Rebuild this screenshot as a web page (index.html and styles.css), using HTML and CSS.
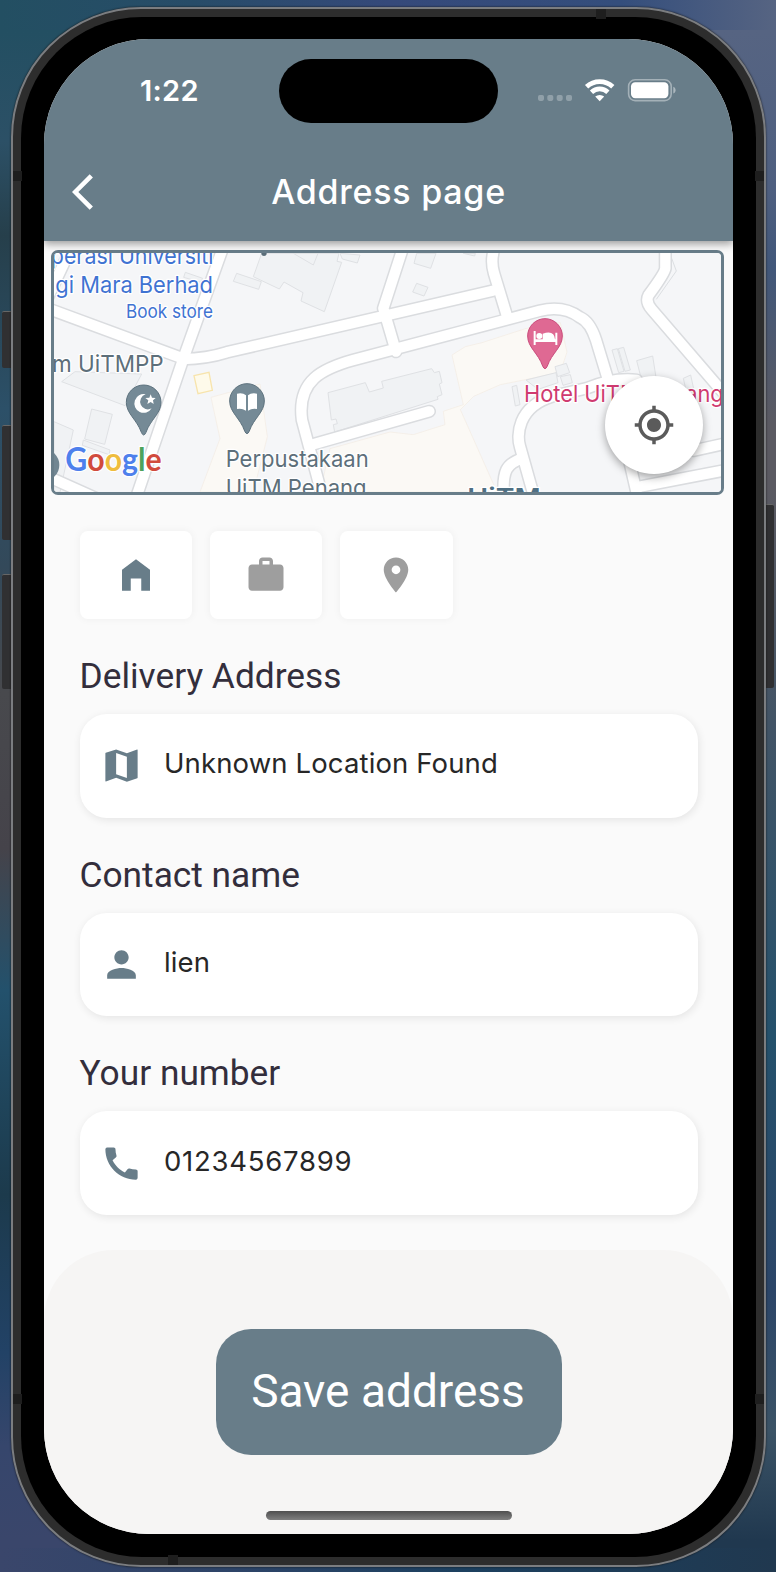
FILE: index.html
```html
<!DOCTYPE html>
<html lang="en">
<head>
<meta charset="utf-8">
<title>Address page</title>
<link rel="stylesheet" href="styles.css">
</head>
<body>
<div class="wallpaper">
  <i class="side-key key-action"></i><i class="side-key key-up"></i><i class="side-key key-down"></i><i class="side-key key-power"></i>
  <div class="phone">
    <i class="band band-l1"></i><i class="band band-r1"></i><i class="band band-l2"></i><i class="band band-r2"></i><i class="band band-t"></i><i class="band band-b"></i>
    <div class="bezel">
      <div class="screen">
        <header class="app-bar">
          <div class="status">
            <span class="time">1:22</span>
            <span class="island"></span>
            <svg class="status-icons" viewBox="0 0 138 24" width="138" height="24">
              <g fill="#fff" fill-opacity=".27"><rect x="0" y="15.9" width="6" height="6" rx="1.800"/><rect x="9.300" y="15.9" width="6" height="6" rx="1.800"/><rect x="18.700" y="15.9" width="6" height="6" rx="1.800"/><rect x="28" y="15.9" width="6" height="6" rx="1.800"/></g>
              <g fill="none" stroke="#fff" stroke-width="4.700"><path d="M48.600 7.800a19 19 0 0 1 26.200 0"/><path d="M53.500 13.200a12 12 0 0 1 16.400 0"/></g>
              <path d="M57.200 17.600a6.900 6.900 0 0 1 9 0l-4.500 4.600z" fill="#fff"/>
              <rect x="90.600" y=".8" width="42.600" height="20.800" rx="6.500" fill="none" stroke="#fff" stroke-opacity=".4" stroke-width="1.600"/>
              <rect x="93" y="3.200" width="37.400" height="16" rx="4.200" fill="#fff"/>
              <path d="M135.300 7.800c3 1.200 3 5.500 0 6.800z" fill="#fff" fill-opacity=".45"/>
            </svg>
          </div>
          <div class="title-row">
            <svg class="back" viewBox="0 0 22 36" width="22" height="36"><path d="M19.300 1.800 3.200 18l16.100 16.200" fill="none" stroke="#fff" stroke-width="4.600"/></svg>
            <h1>Address page</h1>
          </div>
        </header>
        <main class="content">
          <section class="map">
            <svg class="map-art" viewBox="42 39 2001 717" width="667" height="239" preserveAspectRatio="none">
              <rect x="42" y="39" width="2001" height="717" fill="#f5f6f8"/>
              <g fill="#fbf9f5" stroke="#f3ece3" stroke-width="2">
                <path d="M513 472 660 432 682 590 640 756H480l60-160z"/>
                <path d="M1236 345l40-25 50-12 130-42 105-18 20 88-20 60-80 18-100 20-80 35-40 40 110 247H840l30-130 180-50 70 8 95-30-5-40 60-20z"/>
              </g>
              <path d="M462 407l45-10 10 54-43 10z" fill="#fefaea" stroke="#f7e4ad" stroke-width="4"/>
              <g fill="#f0f2f4" stroke="#dfe1e4" stroke-width="3">
                <path d="M665 40 640 110l78 37 14-21 57 32-6 25 70 32 52-148-14-3 6-24z"/>
                <path d="M590 100l74 25-8 23-76-24zM436 97l52 18-5 12-52-15zM760 40l60 35 14-35zM900 40l60 5-8 24-45-12z"/>
                <path d="M105 395 65 425l190 72 50-95zM42 545l58 25-40 186H42zM155 507l62 16-23 90-60-16zM130 600l80 30-3 14-80-28z"/>
                <path d="M864 458l112-30 12 28 42-12-5-20 150-38 8 12 15-4 8 34-8 4 8 32-14 6 2 8-310 98-4-22 12-3-4-14-14 3z"/>
                <path d="M1130 40h58l-16 45-50-15zM1130 130l34 12-12 26-34-12zM1270 40h36l-2 8z"/>
                <path d="M1545 380l34-10 10 28-36 12zM1561 410l30-6 6 24-28 8zM1416 440l14-4 10 58-14 4zM1458 420l90-22 6 30-60 20zM1716 330l16-4 20 68-16 4zM1735 326l16-4 20 68-16 4zM1790 362l48-14 14 90-40 10zM1930 415l22-10 36 165-22 6z"/>
              </g>
              <path d="M1895 55l14 38-60 85" fill="none" stroke="#dcdfe2" stroke-width="3"/>
              <g class="road-edge">
                <path d="M30 208 420 352M550 20 432 350 286 780M20 180 95 20"/>
                <path d="M430 357Q500 356 560 337L1358 152M1090 20 1030 205 1068 335M1365 20Q1350 60 1362 100L1403 235"/>
                <path d="M850 780 786 540C770 420 850 385 940 360L1403 238 1500 212Q1570 195 1620 232 1650 245 1668 300L1706 425"/>
                <path d="M815 614 1168 514M1876 20V85Q1874 100 1826 165 1815 185 1835 208L2060 470"/>
                <path d="M1790 420Q1720 412 1640 445L1540 468C1430 500 1430 590 1440 620L1485 780M1448 655C1400 670 1385 690 1392 780M1765 650 1795 780M1960 632 2060 610M1800 740 2060 690M20 708 180 780"/>
              </g>
              <g class="road-fill">
                <path d="M30 208 420 352M550 20 432 350 286 780M20 180 95 20"/>
                <path d="M430 357Q500 356 560 337L1358 152M1090 20 1030 205 1068 335M1365 20Q1350 60 1362 100L1403 235"/>
                <path d="M850 780 786 540C770 420 850 385 940 360L1403 238 1500 212Q1570 195 1620 232 1650 245 1668 300L1706 425"/>
                <path d="M815 614 1168 514M1876 20V85Q1874 100 1826 165 1815 185 1835 208L2060 470"/>
                <path d="M1790 420Q1720 412 1640 445L1540 468C1430 500 1430 590 1440 620L1485 780M1448 655C1400 670 1385 690 1392 780M1765 650 1795 780M1960 632 2060 610M1800 740 2060 690M20 708 180 780"/>
              </g>
              <circle cx="672" cy="40" r="8" fill="#5b6e79"/>
              <circle cx="10" cy="675" r="48" fill="#718692"/>
              <g class="pin-slate"><path d="M311 435a52 52 0 0 0-52 52c0 34 32 52 45 90q7 16 14 0c13-38 45-56 45-90a52 52 0 0 0-52-52z"/><path d="M621 431a52 52 0 0 0-52 52c0 34 32 52 45 90q7 16 14 0c13-38 45-56 45-90a52 52 0 0 0-52-52z"/></g>
              <path class="pin-pink" d="M1515 236a52 52 0 0 0-52 52c0 34 32 52 45 90q7 16 14 0c13-38 45-56 45-90a52 52 0 0 0-52-52z"/>
              <g fill="#fff">
                <path d="M317 463a28 28 0 1 0 18 42 23 23 0 1 1-18-42z"/>
                <path d="M332 463l4 10 11 1-8 7 2 11-9-6-10 6 3-11-9-7 12-1z"/>
                <path d="M591 461q17-4 27 5v46q-12-8-27-5zM651 461q-17-4-27 5v46q12-8 27-5z"/>
                <path d="M1481 273h6v25h21v-17q35-12 37 17h1v-20h6v37h-6v-9h-59v9h-6z"/><circle cx="1498" cy="288" r="9"/>
              </g>
              <g class="map-label">
                <g fill="#3f73d2"><text x="-6" y="72" font-size="70" textLength="526" lengthAdjust="spacingAndGlyphs">operasi Universiti</text><text x="46" y="160" font-size="70" textLength="473" lengthAdjust="spacingAndGlyphs">gi Mara Berhad</text><text x="258" y="234" font-size="57" textLength="261" lengthAdjust="spacingAndGlyphs">Book store</text></g>
                <g fill="#5d6f7a"><text x="36" y="395" font-size="70" textLength="335" lengthAdjust="spacingAndGlyphs">m UiTMPP</text><text x="557" y="680" font-size="70" textLength="429" lengthAdjust="spacingAndGlyphs">Perpustakaan</text><text x="557" y="769" font-size="70" textLength="423" lengthAdjust="spacingAndGlyphs">UiTM Penang</text></g>
                <text x="1452" y="486" font-size="70" textLength="599" lengthAdjust="spacingAndGlyphs" fill="#cf3a70">Hotel UiTM Penang</text>
                <text x="1282" y="801" font-size="78" font-weight="600" textLength="220" lengthAdjust="spacingAndGlyphs" fill="#4e6f83">UiTM</text>
              </g>
              <text class="google" x="76" y="692" font-size="97" textLength="289" lengthAdjust="spacingAndGlyphs"><tspan fill="#4e80ec">G</tspan><tspan fill="#d14b3d">o</tspan><tspan fill="#efbd3e">o</tspan><tspan fill="#4e80ec">g</tspan><tspan fill="#4ca35b">l</tspan><tspan fill="#d14b3d">e</tspan></text>
            </svg>
            <button class="locate" aria-label="My location"><svg viewBox="0 0 24 24" width="42" height="42"><path fill="#5b5b5b" d="M12 8c-2.210 0-4 1.790-4 4s1.790 4 4 4 4-1.790 4-4-1.790-4-4-4zm8.940 3A8.994 8.994 0 0 0 13 3.060V1h-2v2.060A8.994 8.994 0 0 0 3.060 11H1v2h2.060A8.994 8.994 0 0 0 11 20.940V23h2v-2.060A8.994 8.994 0 0 0 20.940 13H23v-2h-2.060zM12 19c-3.870 0-7-3.130-7-7s3.130-7 7-7 7 3.130 7 7-3.130 7-7 7z"/></svg></button>
          </section>
          <div class="form">
            <div class="types">
              <button class="type active"><svg viewBox="0 0 24 24"><path d="M4 21V9l8-6 8 6v12h-5v-7H9v7z"/></svg></button>
              <button class="type"><svg viewBox="0 0 24 24"><path d="M20 6h-4V4c0-1.110-.89-2-2-2h-4c-1.110 0-2 .89-2 2v2H4c-1.110 0-1.990.89-1.990 2L2 19c0 1.110.89 2 2 2h16c1.110 0 2-.89 2-2V8c0-1.110-.89-2-2-2zm-6 0h-4V4h4v2z"/></svg></button>
              <button class="type"><svg viewBox="0 0 24 24"><path d="M12 2C8.130 2 5 5.130 5 9c0 5.250 7 13 7 13s7-7.750 7-13c0-3.870-3.130-7-7-7zm0 9.500a2.500 2.500 0 0 1 0-5 2.500 2.500 0 0 1 0 5z"/></svg></button>
            </div>
            <h2>Delivery Address</h2>
            <div class="field"><svg viewBox="0 0 24 24"><path d="M15 5.100 9 3 3.200 4.950 3 5.200V20.800l.3.150L9 18.900l6 2.100 5.800-1.950.2-.25V3.200l-.3-.15zM15 19l-6-2.110V5l6 2.110z"/></svg><span>Unknown Location Found</span></div>
            <h2>Contact name</h2>
            <div class="field"><svg viewBox="0 0 24 24"><path d="M12 12c2.210 0 4-1.790 4-4s-1.790-4-4-4-4 1.790-4 4 1.790 4 4 4zm0 2c-2.670 0-8 1.340-8 4v2h16v-2c0-2.660-5.330-4-8-4z"/></svg><span>lien</span></div>
            <h2>Your number</h2>
            <div class="field"><svg viewBox="0 0 24 24"><path d="M20.010 15.380c-1.230 0-2.420-.2-3.530-.56a.977.977 0 0 0-1.010.24l-1.570 1.970c-2.830-1.350-5.480-3.900-6.890-6.830l1.950-1.660c.27-.28.35-.67.24-1.020-.37-1.110-.56-2.300-.56-3.530 0-.54-.45-.99-.99-.99H4.190C3.650 3 3 3.240 3 3.990 3 13.280 10.730 21 20.010 21c.71 0 .99-.63.99-1.180v-3.450c0-.54-.45-.99-.99-.99z"/></svg><span class="number">01234567899</span></div>
          </div>
        </main>
        <footer class="bottom">
          <button class="save">Save address</button>
          <span class="home-indicator"></span>
        </footer>
      </div>
    </div>
  </div>
</div>
</body>
</html>
```
FILE: styles.css
```css
* { box-sizing: border-box; }
body { margin: 0; font-family: Roboto, sans-serif; }
h1, h2 { margin: 0; font-weight: 400; }
button { border: 0; padding: 0; margin: 0; font: inherit; }
svg { display: block; flex: none; }

.wallpaper {
  position: relative;
  width: 776px;
  height: 1572px;
  padding: 7px 9px 4px 11px;
  overflow: hidden;
  background:
    linear-gradient(90deg, #234f62 0, #274c68 25%, #35497a 50%, #344e7c 80%, #566482 100%) top / 100% 30px no-repeat,
    linear-gradient(90deg, #3a466b 0, #2d4468 30%, #1c405f 60%, #20384f 100%) bottom / 100% 24px no-repeat,
    linear-gradient(#234f62 2%, #2c5066 9%, #263f4b 15%, #2c5068 26%, #33495a 36%, #48494d 44%, #45434a 54%, #23516c 63%, #1c3a4c 76%, #224266 86%, #36466c 92%, #3a466b 98%) left / 50% 100% no-repeat,
    linear-gradient(#566482 2%, #4e5f80 12%, #41577a 17%, #5b5a62 27%, #5b5a62 31%, #425466 46%, #24516c 66%, #2b4568 82%, #3b5366 91%, #20384f 98%) right / 50% 100% no-repeat;
}
.phone {
  position: relative;
  width: 755px;
  height: 1560px;
  padding: 8px;
  border: 2px solid #7b7d80;
  border-radius: 130px;
  background: #2d2d2d;
  box-shadow: 0 0 2px #111;
}
.bezel { width: 735px; height: 1540px; padding: 22px 23px; border-radius: 121px; background: #000; }
.screen {
  display: flex;
  flex-direction: column;
  width: 689px;
  height: 1495px;
  overflow: hidden;
  border-radius: 105px;
  background: #fafafa;
}
.side-key { position: absolute; width: 10px; background: #303032; border-top: 1px solid #666; border-radius: 2px 0 0 2px; }
.key-action { left: 2px; top: 311px; height: 57px; }
.key-up { left: 2px; top: 425px; height: 115px; }
.key-down { left: 2px; top: 574px; height: 115px; }
.key-power { left: 764px; top: 504px; height: 184px; border-radius: 0 2px 2px 0; }
.band { position: absolute; width: 9px; height: 10px; background: #1e1e1e; }
.band-l1, .band-l2 { left: 0; }
.band-r1, .band-r2 { right: 0; }
.band-l1, .band-r1 { top: 162px; }
.band-l2, .band-r2 { top: 1385px; }
.band-t { left: 583px; top: 0; width: 10px; }
.band-b { left: 155px; bottom: 0; width: 10px; }

.app-bar {
  position: relative;
  z-index: 1;
  flex: none;
  height: 202px;
  background: #687d89;
  box-shadow: 0 3px 8px rgba(0, 0, 0, .38);
  color: #fff;
  font-family: Inter, sans-serif;
}
.status { display: grid; grid-template-columns: 235px 219px 1fr; height: 104px; padding-top: 20px; }
.time { padding: 14px 0 0 96px; font-size: 29px; line-height: 36px; font-weight: 600; letter-spacing: .3px; }
.island { height: 64px; border-radius: 32px; background: #000; }
.status-icons { margin: 20px 0 0 40px; }
.title-row { display: grid; grid-template-columns: 28px 22px 1fr; align-items: center; height: 97px; }
.back { grid-column: 2; }
.title-row h1 { padding-right: 50px; text-align: center; font-size: 34px; line-height: 44px; font-weight: 500; letter-spacing: .75px; }

.content { flex: none; height: 1009px; padding: 9px 9px 0 7px; }
.map { position: relative; height: 245px; border: 3px solid #687d89; border-radius: 7px; overflow: hidden; }
.road-edge, .road-fill { fill: none; stroke-linecap: round; stroke-linejoin: round; }
.road-edge { stroke: #dadcdf; stroke-width: 40px; }
.road-fill { stroke: #fff; stroke-width: 31px; }
.pin-slate { fill: #758a96; stroke: #5d727e; stroke-width: 3px; }
.pin-pink { fill: #df6993; stroke: #c94b7b; stroke-width: 3px; }
.map-label { font-family: Inter, sans-serif; paint-order: stroke; stroke: #fff; stroke-width: 8px; stroke-linejoin: round; }
.google { font-family: Lato, sans-serif; font-weight: 700; paint-order: stroke; stroke: #fff; stroke-width: 7px; }
.locate {
  position: absolute;
  right: 18px;
  bottom: 18px;
  display: grid;
  place-items: center;
  width: 98px;
  height: 98px;
  border-radius: 50%;
  background: #fff;
  box-shadow: 0 3px 8px rgba(0, 0, 0, .35);
}
.form { padding: 36px 26px 0 28.500px; }
.types { display: flex; gap: 17.500px; }
.type {
  display: grid;
  place-items: center;
  width: 112.700px;
  height: 88px;
  border-radius: 8px;
  background: #fff;
  box-shadow: 0 0 9px rgba(0, 0, 0, .05);
}
.type svg { width: 42px; height: 42px; fill: #9e9e9e; }
.type.active svg { fill: #687d89; }
.form h2 { height: 95px; padding-top: 34px; color: #332e3c; font-size: 35.300px; line-height: 46px; white-space: nowrap; }
.field {
  display: flex;
  align-items: center;
  gap: 21.500px;
  height: 103.700px;
  padding-left: 20px;
  border-radius: 27px;
  background: #fff;
  box-shadow: 1px 2px 9px rgba(0, 0, 0, .09);
  color: #272727;
  font: 27.500px/36px Inter, sans-serif;
}
.field svg { width: 43px; height: 43px; fill: #687d89; }
.field span { margin-top: -5px; letter-spacing: .13px; }
.field .number { letter-spacing: .75px; }

.bottom {
  display: flex;
  flex-direction: column;
  align-items: center;
  justify-content: space-between;
  flex: none;
  height: 284px;
  padding: 79px 0 14px;
  border-radius: 70px 70px 0 0;
  background: #f6f5f4;
}
.save { width: 346px; height: 126px; padding: 0 1px 2px 0; border-radius: 35px; background: #687d89; color: #fff; font-size: 46px; }
.home-indicator { width: 246px; height: 9px; border-radius: 5px; background: linear-gradient(#4f4f4f, #808080); }
```
